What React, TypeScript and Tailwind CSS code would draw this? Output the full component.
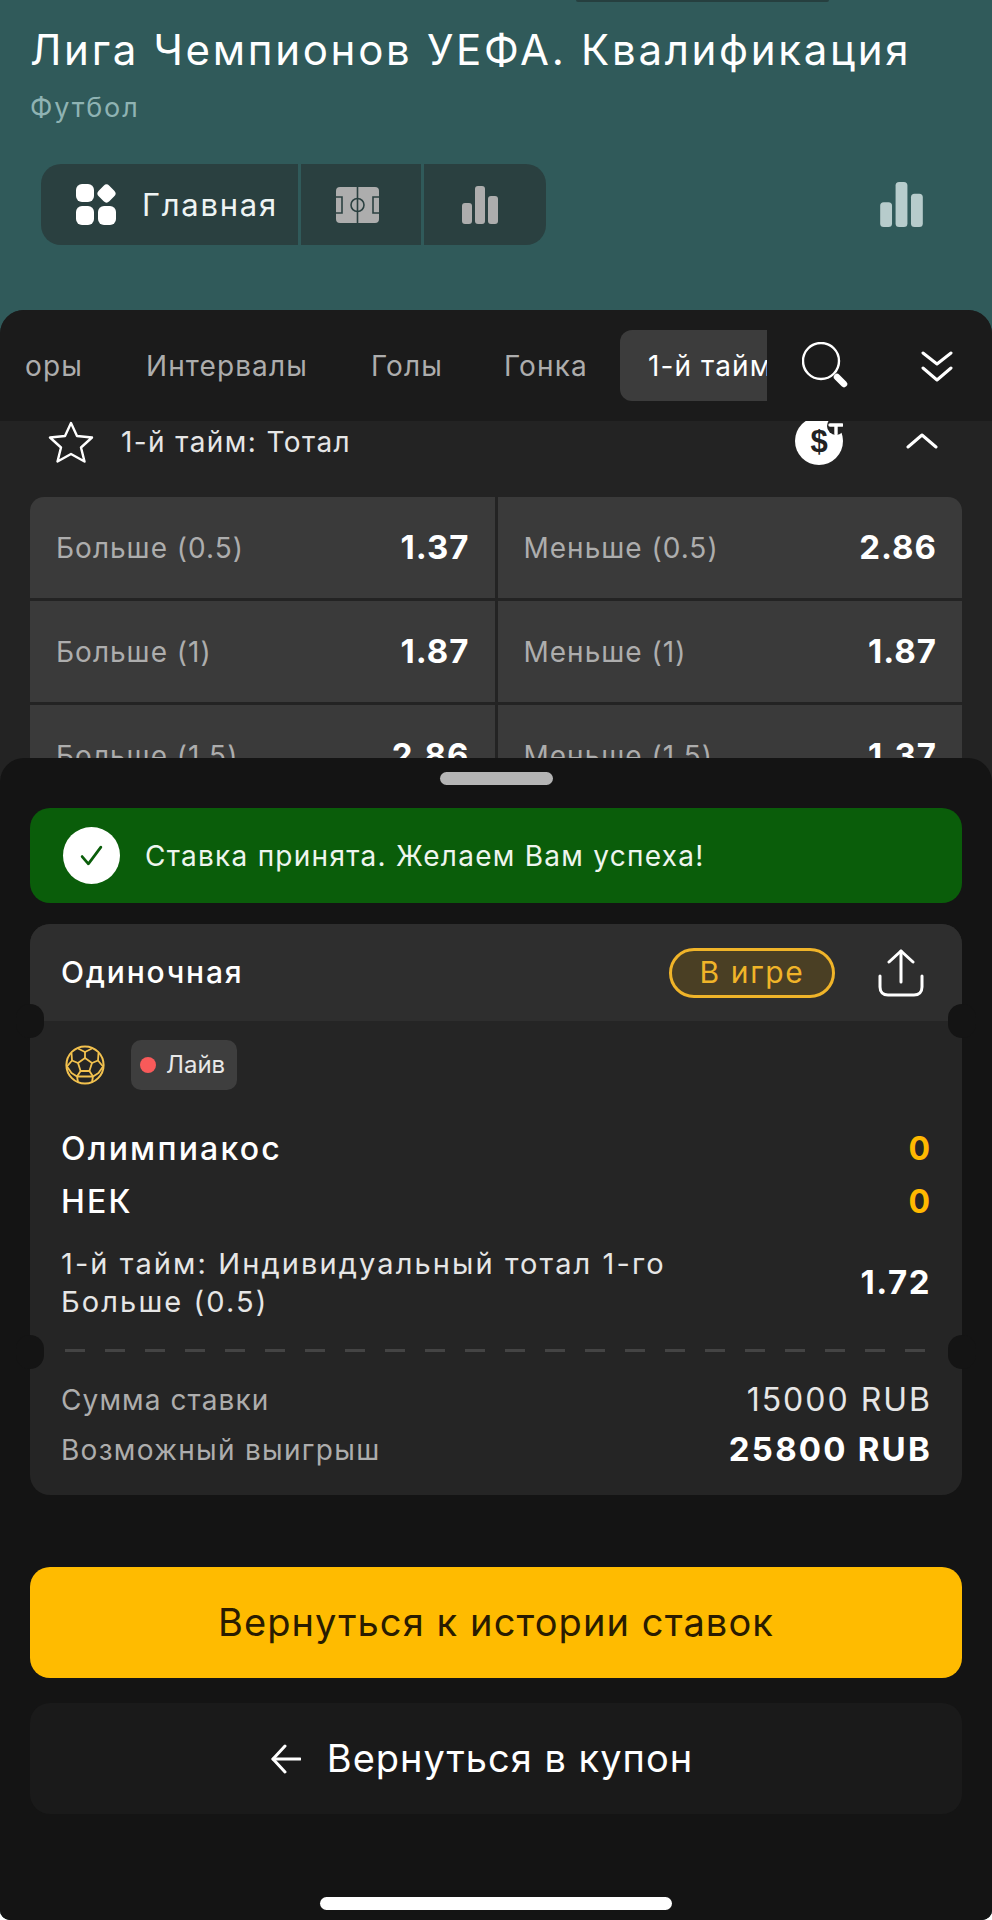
const FONT = "font-['Inter','Noto_Sans',sans-serif]";

const rows = [
  { left: "Больше (0.5)", leftOdd: "1.37", right: "Меньше (0.5)", rightOdd: "2.86" },
  { left: "Больше (1)", leftOdd: "1.87", right: "Меньше (1)", rightOdd: "1.87" },
  { left: "Больше (1.5)", leftOdd: "2.86", right: "Меньше (1.5)", rightOdd: "1.37" },
];

const BarsIcon = ({ className }: { className: string }) => (
  <svg viewBox="0 0 36 38" className={className} fill="currentColor">
    <rect x="0" y="17" width="10" height="21" rx="3" />
    <rect x="13" y="0" width="10" height="38" rx="3" />
    <rect x="26" y="10" width="10" height="28" rx="3" />
  </svg>
);

const TilesIcon = () => (
  <svg viewBox="0 0 40 41" className="w-[40px] h-[41px]" fill="#ffffff">
    <rect x="0" y="0" width="18" height="18" rx="6" />
    <rect x="23" y="2" width="15" height="15" rx="4" transform="rotate(45 30.5 9.5)" />
    <rect x="0" y="22" width="18" height="19" rx="6" />
    <rect x="22" y="22" width="18" height="19" rx="6" />
  </svg>
);

const FieldIcon = () => (
  <svg viewBox="0 0 43 36" className="w-[43px] h-[36px]">
    <rect x="0" y="0" width="43" height="36" rx="4" fill="#adadad" />
    <g fill="none" stroke="#2b4040" strokeWidth="1.6">
      <path d="M21.5 0V36" />
      <circle cx="21.5" cy="18" r="6.5" />
      <path d="M0 10H6V26H0" />
      <path d="M43 10H37V26H43" />
    </g>
  </svg>
);

const SearchIcon = () => (
  <svg viewBox="0 0 46 46" className="w-[46px] h-[46px]" fill="none" stroke="#ffffff">
    <circle cx="19" cy="19" r="18" strokeWidth="2.4" />
    <path d="M35 35L42 42" strokeWidth="6.5" strokeLinecap="round" />
  </svg>
);

const DoubleChevron = () => (
  <svg viewBox="0 0 32 32" className="w-[32px] h-[32px]" fill="none" stroke="#ffffff" strokeWidth="3" strokeLinecap="round" strokeLinejoin="round">
    <path d="M2 3L16 14L30 3" />
    <path d="M2 18L16 30L30 18" />
  </svg>
);

const StarIcon = () => (
  <svg viewBox="0 0 46 42" className="w-[46px] h-[42px]" fill="none" stroke="#ffffff" strokeWidth="2.4" strokeLinejoin="round">
    <path d="M23 2L29 15L44 16.5L33 26.5L36.5 40.5L23 33L9.5 40.5L13 26.5L2 16.5L17 15Z" />
  </svg>
);

const CoinIcon = () => (
  <svg viewBox="0 0 48 50" className="w-[48px] h-[50px]">
    <circle cx="24" cy="26" r="24" fill="#ffffff" />
    <text x="24" y="37" textAnchor="middle" fontSize="31" fontWeight="700" fontFamily="Liberation Sans, sans-serif" fill="#222222">$</text>
    <circle cx="41" cy="11" r="9" fill="#222222" />
    <path d="M35 10H47M41 10V19" stroke="#ffffff" strokeWidth="3.4" strokeLinecap="round" fill="none" />
  </svg>
);

const ChevronUp = () => (
  <svg viewBox="0 0 32 16" className="w-[32px] h-[16px]" fill="none" stroke="#ffffff" strokeWidth="3" strokeLinecap="round" strokeLinejoin="round">
    <path d="M2 14L16 2L30 14" />
  </svg>
);

const CheckIcon = () => (
  <svg viewBox="0 0 24 24" className="w-[25px] h-[25px]" fill="none" stroke="#0a5d0a" strokeWidth="2.6" strokeLinecap="round" strokeLinejoin="round">
    <path d="M3 13L9 20L21 4" />
  </svg>
);

const ShareIcon = () => (
  <svg viewBox="0 0 46 48" className="w-[46px] h-[48px]" fill="none" stroke="#ffffff" strokeWidth="3" strokeLinecap="round" strokeLinejoin="round">
    <path d="M23 33V2" />
    <path d="M11 13L23 2L35 13" />
    <path d="M2 27V38C2 43 5 46 10 46H36C41 46 44 43 44 38V27" />
  </svg>
);

const BallIcon = () => (
  <svg viewBox="0 0 40 40" className="w-[40px] h-[40px]" fill="none" stroke="#f2c14e" strokeWidth="1.8" strokeLinejoin="round">
    <circle cx="20" cy="20" r="18.6" strokeWidth="2" />
    <path d="M20 13L27 18L24.4 26H15.6L13 18Z" />
    <path d="M20 13V7M27 18L33 15.5M24.4 26L28 31.5M15.6 26L12 31.5M13 18L7 15.5" />
    <path d="M13 3.5L20 7L27 3.5M33 15.5L33.5 8M33 15.5L38 21.5L33.5 28L28 31.5L27 37M28 31.5H12L13 37M12 31.5L6.5 28L2 21.5L7 15.5L6.5 8" />
  </svg>
);

const BackArrow = () => (
  <svg viewBox="0 0 30 30" className="w-[30px] h-[30px]" fill="none" stroke="#ffffff" strokeWidth="3" strokeLinecap="round" strokeLinejoin="round">
    <path d="M14 2L2 15L14 28" />
    <path d="M2 15H29" />
  </svg>
);

const Notch = ({ side }: { side: "left" | "right" }) => (
  <div
    className={
      side === "left"
        ? "absolute -left-[14px] -top-[17px] w-[28px] h-[34px] rounded-full bg-[#141414]"
        : "absolute -right-[14px] -top-[17px] w-[28px] h-[34px] rounded-full bg-[#141414]"
    }
  />
);

export default function App() {
  return (
    <div className="h-[1920px] w-[992px] bg-white">
      <div className={`${FONT} relative h-[1920px] w-[992px] overflow-hidden rounded-b-[10px] bg-[#305a5a] text-white`}>
        <div className="absolute left-[576px] top-0 h-[2px] w-[253px] rounded-b bg-[#263f3f]" />

        <div className="px-[30px] pt-[26px]">
          <h1 className="whitespace-nowrap text-[42px] leading-[48px] font-normal tracking-[2.7px]">Лига Чемпионов УЕФА. Квалификация</h1>
          <p className="mt-[18px] text-[27px] leading-[32px] tracking-[1.9px] text-[#8fb3b3]">Футбол</p>
        </div>

        <div className="mt-[40px] flex items-center justify-between pl-[41px] pr-[69px]">
          <div className="flex h-[81px] w-[505px] gap-[3px] overflow-hidden rounded-[20px]">
            <div className="flex w-[257px] items-center gap-[26px] bg-[#2a4040] pl-[35px]">
              <TilesIcon />
              <span className="text-[31px] leading-[40px] tracking-[1.75px] text-[#eef4f4]">Главная</span>
            </div>
            <div className="flex w-[120px] items-center justify-center bg-[#2a4040] pr-[8px]">
              <FieldIcon />
            </div>
            <div className="flex flex-1 items-center justify-center bg-[#2a4040] pr-[10px]">
              <BarsIcon className="w-[36px] h-[38px] text-[#adadad]" />
            </div>
          </div>
          <BarsIcon className="w-[43px] h-[45px] text-[#b7cccc]" />
        </div>

        <div className="mt-[65px] h-[1610px] overflow-hidden rounded-t-[24px] bg-[#232323]">
          <div className="flex h-[111px] items-start bg-[#1b1b1b] pt-[20px]">
            <div className="flex h-[71px] w-[767px] items-center overflow-hidden whitespace-nowrap pl-[25px] text-[28px] tracking-[1.1px] text-[#adadad]">
              <span className="w-[121px] shrink-0">оры</span>
              <span className="w-[225px] shrink-0">Интервалы</span>
              <span className="w-[133px] shrink-0">Голы</span>
              <span className="w-[116px] shrink-0">Гонка</span>
              <div className="flex h-[71px] w-[200px] shrink-0 items-center rounded-l-[12px] bg-[#3c3c3c] pl-[28px] text-white">1-й тайм</div>
            </div>
            <div className="ml-[35px] mt-[12px]">
              <SearchIcon />
            </div>
            <div className="ml-[73px] mt-[20px]">
              <DoubleChevron />
            </div>
          </div>

          <div className="flex h-[76px] items-start overflow-hidden pl-[48px]">
            <div className="flex h-[42px] items-center">
              <StarIcon />
              <span className="ml-[27px] text-[28px] leading-[36px] tracking-[1.4px] text-[#e6e6e6]">1-й тайм: Тотал</span>
            </div>
            <div className="ml-auto -mt-[6px]">
              <CoinIcon />
            </div>
            <div className="ml-[63px] mr-[54px] mt-[12px]">
              <ChevronUp />
            </div>
          </div>

          <div className="mx-[30px] grid grid-cols-2 gap-[3px] overflow-hidden rounded-[14px]">
            {rows.map((row) => (
              <div key={row.left} className="contents">
                <div className="flex h-[101px] items-center justify-between bg-[#3a3a3a] pl-[26px] pr-[25px]">
                  <span className="text-[28px] tracking-[1px] text-[#adadad]">{row.left}</span>
                  <span className="text-[33px] font-bold tracking-[1px]">{row.leftOdd}</span>
                </div>
                <div className="flex h-[101px] items-center justify-between bg-[#3a3a3a] pl-[26px] pr-[25px]">
                  <span className="text-[28px] tracking-[1px] text-[#adadad]">{row.right}</span>
                  <span className="text-[33px] font-bold tracking-[1px]">{row.rightOdd}</span>
                </div>
              </div>
            ))}
          </div>
        </div>

        <div className="absolute inset-x-0 bottom-0 h-[1162px] rounded-t-[24px] bg-[#141414] px-[30px]">
          <div className="mx-auto mt-[14px] h-[13px] w-[113px] rounded-full bg-[#b5b5b5]" />

          <div className="mt-[23px] flex h-[95px] items-center rounded-[20px] bg-[#0a5d0a] pl-[33px]">
            <div className="flex h-[57px] w-[57px] items-center justify-center rounded-full bg-white">
              <CheckIcon />
            </div>
            <span className="ml-[25px] text-[28px] tracking-[1.26px] text-[#eef5ee]">Ставка принята. Желаем Вам успеха!</span>
          </div>

          <div className="mt-[21px] rounded-[20px] bg-[#252525]">
            <div className="flex h-[97px] items-center rounded-t-[20px] bg-[#2e2e2e] pl-[31px] pr-[38px]">
              <span className="text-[30px] font-medium tracking-[1.8px]">Одиночная</span>
              <span className="ml-auto flex h-[50px] w-[166px] items-center justify-center rounded-full border-[3px] border-[#f0b429] bg-[#4a3f24] text-[30px] tracking-[1.6px] text-[#f0b429]">
                В игре
              </span>
              <div className="ml-[43px]">
                <ShareIcon />
              </div>
            </div>

            <div className="relative">
              <Notch side="left" />
              <Notch side="right" />
            </div>

            <div className="pl-[31px] pr-[32px] pt-[19px]">
              <div className="flex items-center">
                <div className="ml-[4px]">
                  <BallIcon />
                </div>
                <div className="ml-[26px] flex h-[50px] w-[106px] items-center rounded-[10px] bg-[#3e3e3e] pl-[9px]">
                  <span className="h-[16px] w-[16px] rounded-full bg-[#f85a5a]" />
                  <span className="ml-[10px] text-[24px] text-[#e8e8e8]">Лайв</span>
                </div>
              </div>

              <div className="mt-[33px] flex h-[52px] items-center justify-between text-[32px] font-medium tracking-[2.2px]">
                <span>Олимпиакос</span>
                <span className="font-bold tracking-normal text-[#ffb800]">0</span>
              </div>
              <div className="flex h-[53px] items-center justify-between text-[32px] font-medium tracking-[2.2px]">
                <span>НЕК</span>
                <span className="font-bold tracking-normal text-[#ffb800]">0</span>
              </div>

              <div className="mt-[17px] flex items-center justify-between">
                <p className="whitespace-nowrap text-[29px] leading-[38px] tracking-[2.1px] text-[#e6e6e6]">
                  1-й тайм: Индивидуальный тотал 1-го
                  <br />
                  Больше (0.5)
                </p>
                <span className="-mr-[1px] text-[33px] font-bold tracking-[1.5px]">1.72</span>
              </div>
            </div>

            <div className="mx-[35px] mt-[28px] h-[3px] bg-[repeating-linear-gradient(90deg,#444444_0,#444444_20px,transparent_20px,transparent_40px)]" />
            <div className="relative">
              <Notch side="left" />
              <Notch side="right" />
            </div>

            <div className="pb-[20px] pl-[31px] pr-[30px] pt-[23px]">
              <div className="flex h-[50px] items-center justify-between text-[28px] tracking-[1.1px] text-[#adadad]">
                <span>Сумма ставки</span>
                <span className="text-[32px] tracking-[2px] text-[#e6e6e6]">15000 RUB</span>
              </div>
              <div className="flex h-[50px] items-center justify-between text-[28px] tracking-[1.3px] text-[#adadad]">
                <span>Возможный выигрыш</span>
                <span className="text-[33px] font-bold tracking-[2.2px] text-white">25800 RUB</span>
              </div>
            </div>
          </div>

          <button className="mt-[72px] flex h-[111px] w-full items-center justify-center rounded-[20px] bg-[#ffbb00] text-[38px] tracking-[1.1px] text-[#2a1c00]">
            Вернуться к истории ставок
          </button>

          <button className="mt-[25px] flex h-[111px] w-full items-center justify-center gap-[26px] rounded-[20px] bg-[#1a1a1a] pr-[28px] text-[38px] tracking-[1px]">
            <BackArrow />
            Вернуться в купон
          </button>

          <div className="mx-auto mt-[83px] h-[13px] w-[352px] rounded-full bg-white" />
        </div>
      </div>
    </div>
  );
}
